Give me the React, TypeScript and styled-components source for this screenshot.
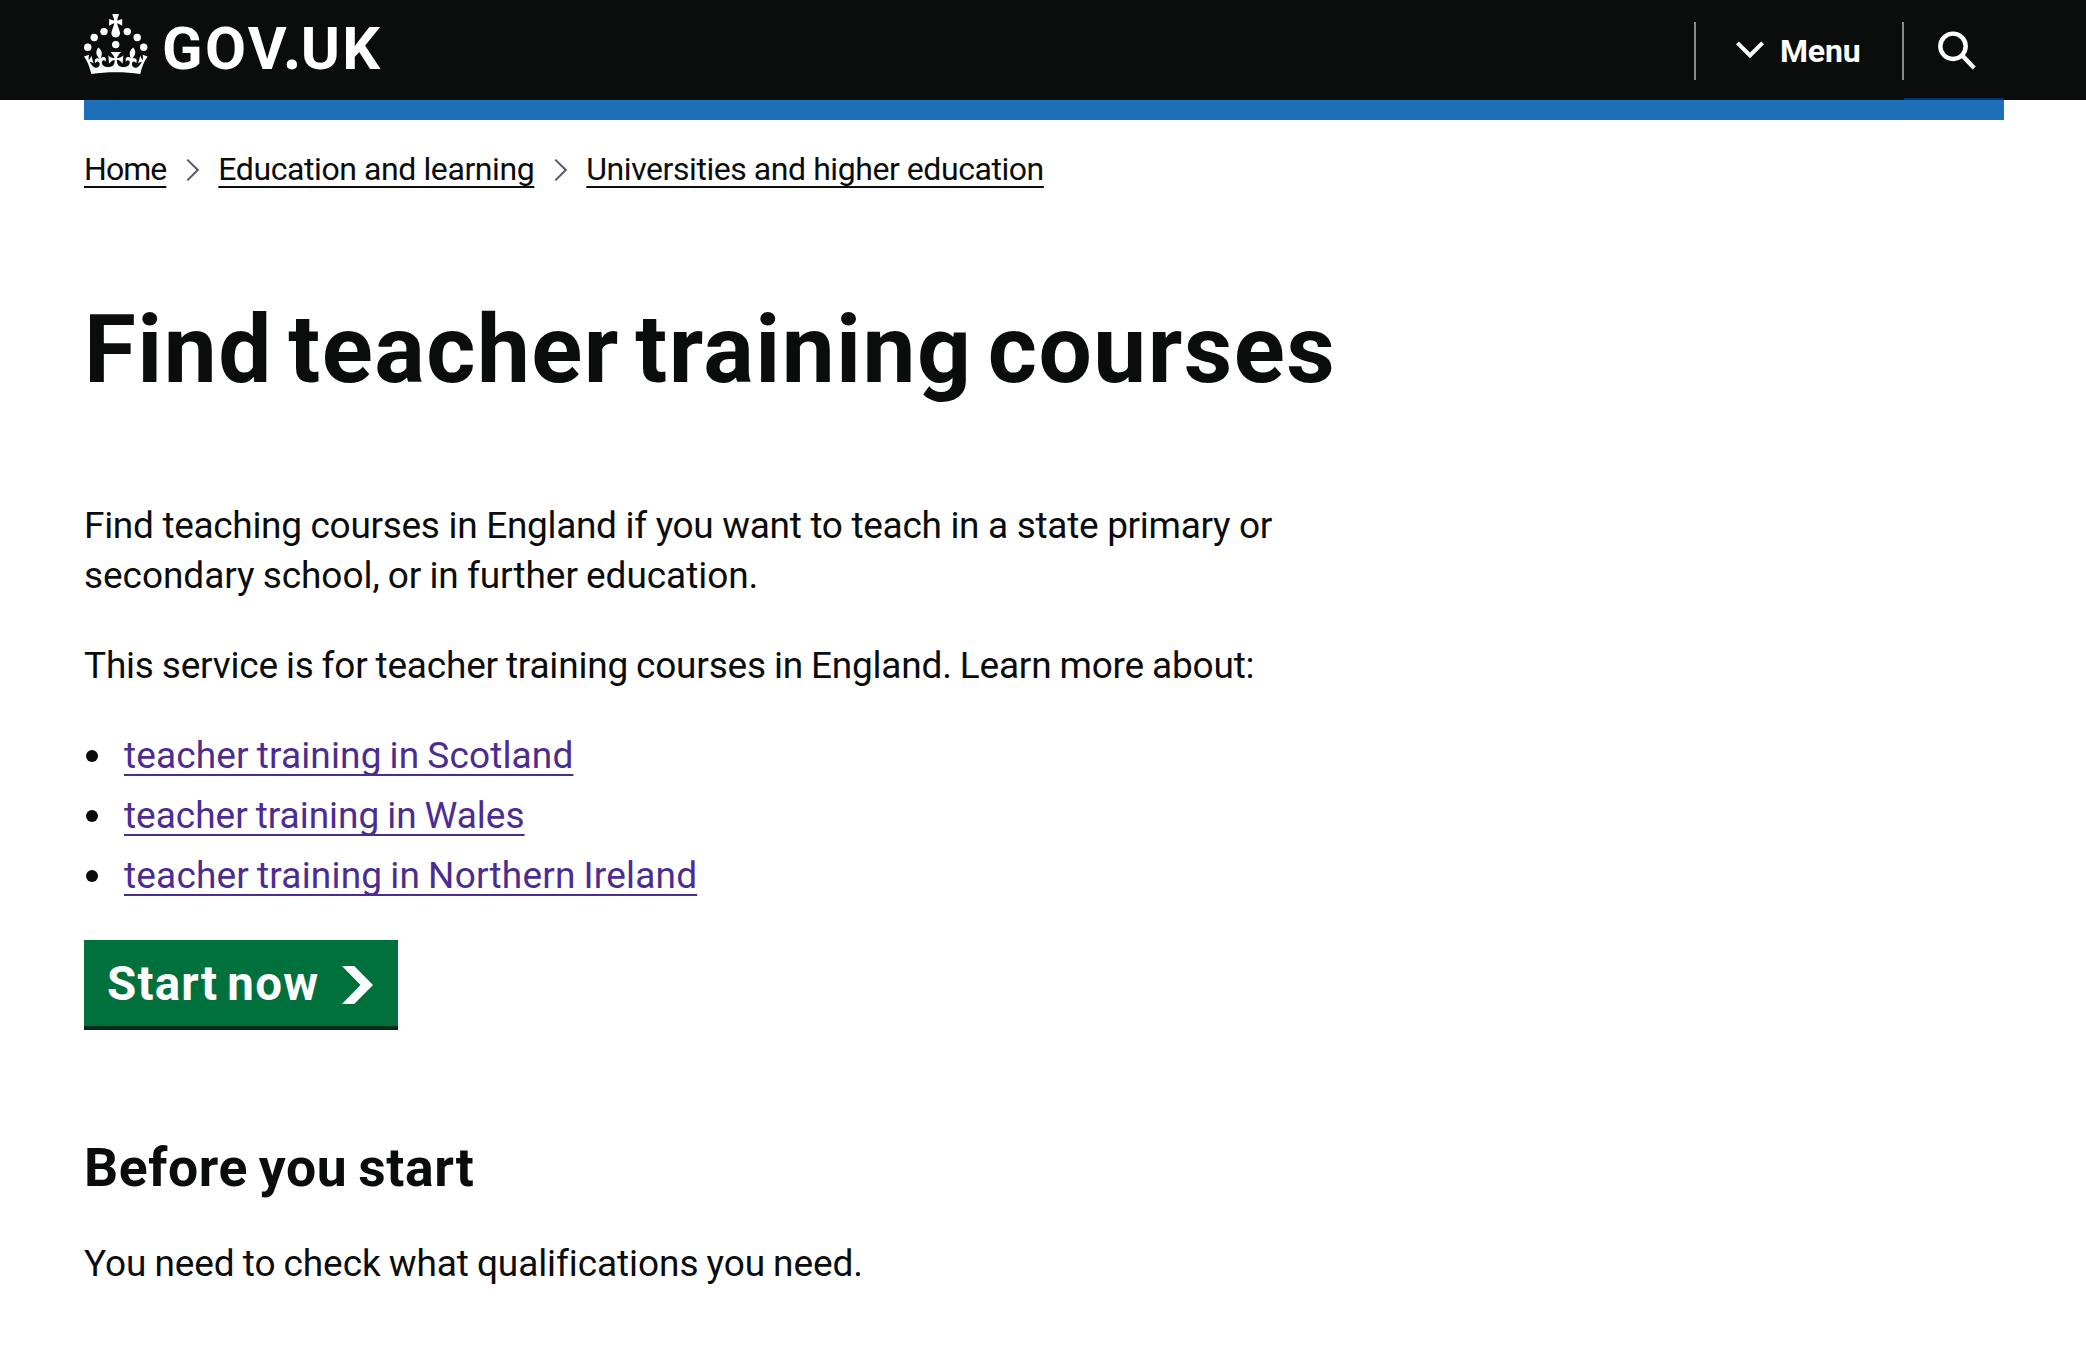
import React from 'react';
import styled, { createGlobalStyle } from 'styled-components';

const GlobalStyle = createGlobalStyle`
  *, *::before, *::after { box-sizing: border-box; }
  body {
    margin: 0;
    background: #fff;
    color: #0b0c0c;
    font-family: Roboto, 'Liberation Sans', sans-serif;
    overflow: hidden;
  }
`;

const Header = styled.header`
  height: 100px;
  padding: 0 82px 0 84px;
  display: flex;
  justify-content: space-between;
  background: #0b0c0c;
  color: #fff;
`;

const Logo = styled.a`
  display: flex;
  align-items: flex-start;
  gap: 14px;
  padding-top: 14px;
  color: inherit;
  text-decoration: none;
`;

const Crown = styled.svg`
  display: block;
  width: 64px;
  height: 60px;
`;

const Wordmark = styled.span`
  font-size: 59.5px;
  font-weight: 700;
  line-height: 71px;
  letter-spacing: 2.4px;
  white-space: nowrap;
`;

const Dot = styled.span`
  font-family: 'Noto Sans', sans-serif;
  line-height: 1;
  margin: 0 -2px 0 -5.5px;
`;

const Nav = styled.nav`
  display: flex;
`;

const navItem = `
  display: flex;
  height: 100px;
  border: 0;
  padding: 0;
  background: none;
  color: inherit;
  font-family: inherit;
`;

const Divider = styled.span`
  width: 2px;
  height: 58px;
  margin-top: 22px;
  background: #858c90;
`;

const MenuButton = styled.button`
  ${navItem}
  width: 206px;
  padding-left: 39px;
  gap: 15px;
  align-items: center;
  font-size: 32px;
  font-weight: 700;
  letter-spacing: -0.2px;
`;

const MenuLabel = styled.span`
  line-height: 40px;
  padding-top: 2px;
`;

const SearchButton = styled.button`
  ${navItem}
  width: 100px;
  padding: 29px 0 0 33px;
  border-bottom: 2px solid #003078;
`;

const Container = styled.div`
  margin: 0 82px 0 84px;
`;

const BlueBar = styled.div`
  height: 20px;
  background: #1d70b8;
`;

const Crumbs = styled.ol`
  display: flex;
  list-style: none;
  margin: 0;
  padding: 29px 0 0;
  height: 180px;
`;

const Crumb = styled.li`
  display: flex;
  height: 40px;
`;

const CrumbArrow = styled.svg`
  width: 14px;
  height: 24px;
  margin: 9px 18px 0 20px;
`;

const CrumbLink = styled.a<{ $track: number }>`
  color: #0b0c0c;
  font-size: 32px;
  line-height: 40px;
  letter-spacing: ${p => p.$track}px;
  white-space: nowrap;
  text-decoration: underline 2px;
  text-underline-offset: 6px;
  text-decoration-skip-ink: none;
`;

const Title = styled.h1`
  margin: 0 0 101px;
  font-size: 94.5px;
  line-height: 100px;
  font-weight: 700;
  letter-spacing: 1.45px;
  word-spacing: -9.5px;
  white-space: nowrap;
`;

const Paragraph = styled.p`
  margin: 0 0 40px;
  font-size: 37px;
  line-height: 50px;
`;

const Line = styled.span<{ $track: number; $gap?: number }>`
  display: block;
  letter-spacing: ${p => p.$track}px;
  word-spacing: ${p => p.$gap ?? 0}px;
  white-space: nowrap;
`;

const List = styled.ul`
  margin: 0 0 39px;
  padding: 0;
  list-style: none;
`;

const Item = styled.li`
  display: flex;
  align-items: center;
  gap: 26px;
  padding-left: 2px;
  margin-bottom: 10px;
  font-size: 37px;
  line-height: 50px;
  &::before {
    content: '';
    width: 12px;
    height: 12px;
    border-radius: 50%;
    background: #0b0c0c;
  }
`;

const VisitedLink = styled.a<{ $track: number }>`
  color: #4c2c92;
  letter-spacing: ${p => p.$track}px;
  word-spacing: -1.3px;
  text-decoration: underline 2px;
  text-underline-offset: 6px;
  text-decoration-skip-ink: none;
`;

const StartButton = styled.a`
  display: flex;
  align-items: flex-start;
  width: 314px;
  height: 90px;
  margin-bottom: 108px;
  padding: 14px 23px 0;
  border-bottom: 4px solid #002d18;
  background: #00703c;
  color: #fff;
  font-size: 47.5px;
  font-weight: 700;
  line-height: 60px;
  letter-spacing: 1.2px;
  word-spacing: -4px;
  justify-content: space-between;
  white-space: nowrap;
  text-decoration: none;
`;

const StartArrow = styled.svg`
  width: 31px;
  height: 38px;
  margin: 12px 2px 0 0;
`;

const SubHeading = styled.h2`
  margin: 0 0 41px;
  font-size: 53.5px;
  line-height: 60px;
  font-weight: 700;
  letter-spacing: 0.6px;
  word-spacing: -3px;
`;

const crumbs = [
  { label: 'Home', track: -0.95 },
  { label: 'Education and learning', track: -0.41 },
  { label: 'Universities and higher education', track: -0.44 },
];

const regions = [
  { label: 'teacher training in Scotland', track: 0.14 },
  { label: 'teacher training in Wales', track: 0 },
  { label: 'teacher training in Northern Ireland', track: 0.18 },
];

export default function App() {
  return (
    <>
      <GlobalStyle />
      <Header>
        <Logo>
          <Crown viewBox="0 0 64 60" fill="currentColor">
            <circle cx="20" cy="17.6" r="3.7" />
            <circle cx="10.2" cy="23.5" r="3.7" />
            <circle cx="3.7" cy="33.2" r="3.7" />
            <circle cx="31.7" cy="30.6" r="3.7" />
            <circle cx="43.3" cy="17.6" r="3.7" />
            <circle cx="53.2" cy="23.5" r="3.7" />
            <circle cx="59.7" cy="33.2" r="3.7" />
            <path d="M33.1,9.8c.2-.1.3-.3.5-.5l4.6,2.4v-6.8l-4.6,1.5c-.1-.2-.3-.3-.5-.5l1.9-5.9h-6.7l1.9,5.9c-.2.1-.3.3-.5.5l-4.6-1.5v6.8l4.6-2.4c.1.2.3.3.5.5l-2.6,8c-.9,2.8,1.2,5.7,4.1,5.7h0c3,0,5.1-2.9,4.1-5.7l-2.6-8ZM37,37.9s-3.4,3.8-4.1,6.1c2.2,0,4.2-.5,6.4-2.8l-.7,8.5c-2-2.8-4.4-4.1-5.7-3.8.1,3.1.5,6.7,5.8,7.2,3.7.3,6.7-1.5,7-3.8.4-2.6-2-4.3-3.7-1.6-1.4-4.5,2.4-6.1,4.9-3.2-1.9-4.5-1.8-7.7,2.4-10.9,3,4,2.6,7.3-1.2,11.1,2.4-1.3,6.2,0,4,4.6-1.2-2.8-3.7-2.2-4.2.2-.3,1.7.7,3.7,3,4.2,1.9.3,4.7-.9,7-5.9-1.3,0-2.4.7-3.9,1.7l2.4-8c.6,2.3,1.4,3.7,2.2,4.5.6-1.6.5-2.8,0-5.3l5,1.8c-2.6,3.6-5.2,8.7-7.3,17.5-7.4-1.1-15.7-1.7-24.5-1.7h0c-8.8,0-17.1.6-24.5,1.7-2.1-8.9-4.7-13.9-7.3-17.5l5-1.8c-.5,2.5-.6,3.7,0,5.3.8-.8,1.6-2.3,2.2-4.5l2.4,8c-1.5-1-2.6-1.7-3.9-1.7,2.3,5,5.2,6.2,7,5.9,2.3-.4,3.3-2.4,3-4.2-.5-2.4-3-3.1-4.2-.2-2.2-4.6,1.6-6,4-4.6-3.7-3.7-4.2-7.1-1.2-11.1,4.2,3.2,4.3,6.4,2.4,10.9,2.5-2.8,6.3-1.3,4.9,3.2-1.8-2.7-4.1-1-3.7,1.6.3,2.3,3.3,4.1,7,3.8,5.4-.5,5.7-4.2,5.8-7.2-1.3-.2-3.7,1-5.7,3.8l-.7-8.5c2.2,2.3,4.2,2.7,6.4,2.8-.7-2.3-4.1-6.1-4.1-6.1h10.6Z" />
          </Crown>
          <Wordmark>GOV<Dot>.</Dot>UK</Wordmark>
        </Logo>
        <Nav>
          <Divider />
          <MenuButton>
            <svg width="30" height="20" viewBox="0 0 30 20" fill="none" stroke="#fff" strokeWidth="4">
              <path d="M2.4 2.9 15 15.5 27.6 2.9" />
            </svg>
            <MenuLabel>Menu</MenuLabel>
          </MenuButton>
          <Divider />
          <SearchButton aria-label="Search">
            <svg width="42" height="42" viewBox="0 0 42 42" fill="none" stroke="#fff" strokeWidth="4.4">
              <circle cx="16" cy="17.3" r="12.7" />
              <path d="M25 26.3 37.2 39" />
            </svg>
          </SearchButton>
        </Nav>
      </Header>
      <Container>
        <BlueBar />
        <Crumbs>
          {crumbs.map((c, i) => (
            <Crumb key={c.label}>
              {i > 0 && (
                <CrumbArrow viewBox="0 0 14 24" fill="none" stroke="#505a5f" strokeWidth="2">
                  <path d="M1.3 1.6 11.8 12 1.3 22.4" />
                </CrumbArrow>
              )}
              <CrumbLink $track={c.track}>{c.label}</CrumbLink>
            </Crumb>
          ))}
        </Crumbs>
        <Title>Find teacher training courses</Title>
        <Paragraph>
          <Line $track={-0.31}>Find teaching courses in England if you want to teach in a state primary or</Line>
          <Line $track={-0.05} $gap={-1}>secondary school, or in further education.</Line>
        </Paragraph>
        <Paragraph>
          <Line $track={-0.2} $gap={-0.95}>This service is for teacher training courses in England. Learn more about:</Line>
        </Paragraph>
        <List>
          {regions.map(r => (
            <Item key={r.label}>
              <VisitedLink $track={r.track}>{r.label}</VisitedLink>
            </Item>
          ))}
        </List>
        <StartButton>
          Start now
          <StartArrow viewBox="0 0 31 38" fill="#fff">
            <path d="M0 0h12.2L31 19 12.2 38H0l18.5-19z" />
          </StartArrow>
        </StartButton>
        <SubHeading>Before you start</SubHeading>
        <Paragraph>
          <Line $track={-0.08} $gap={-1}>You need to check what qualifications you need.</Line>
        </Paragraph>
      </Container>
    </>
  );
}
